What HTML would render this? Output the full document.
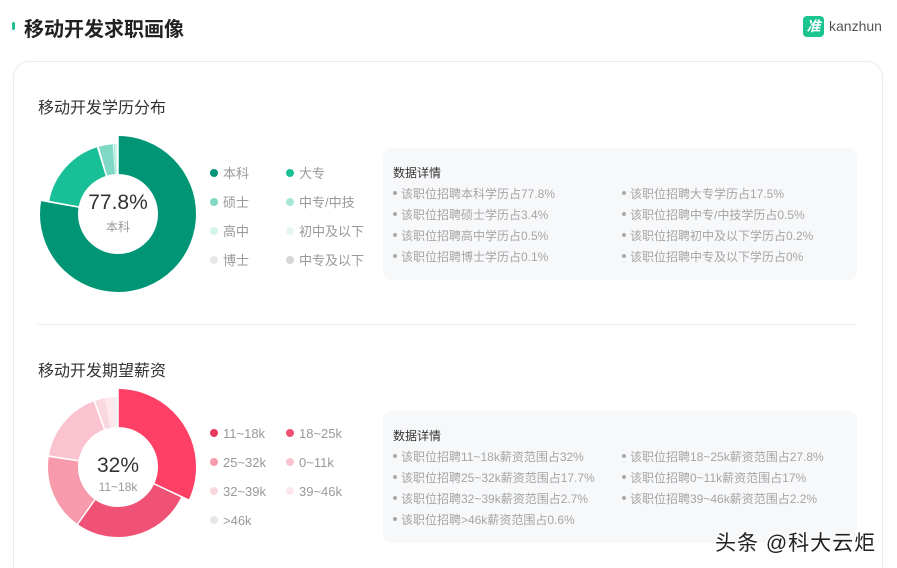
<!DOCTYPE html>
<html><head><meta charset="utf-8"><style>
*{margin:0;padding:0;box-sizing:border-box}
html,body{width:897px;height:568px;overflow:hidden}
body{background:#fff;font-family:"Liberation Sans","Noto Sans CJK SC",sans-serif;position:relative}
.a{position:absolute;white-space:nowrap}
.bar{left:12px;top:22px;width:3px;height:8px;background:#1dbf97;border-radius:2px}
.h1{left:24px;top:13px;font-size:20px;font-weight:bold;color:#222}
.logo{left:803px;top:16px;width:21px;height:21px;background:#19c48f;border-radius:4px;color:#fff;font-size:14px;font-weight:bold;text-align:center;line-height:21px;font-style:italic}
.kz{left:829px;top:18px;font-size:14px;color:#555}
.card{left:13px;top:61px;width:870px;height:507px;border:1px solid #eaeaea;border-bottom:none;border-radius:16px 16px 0 0}
.st{font-size:16px;color:#333;left:38px}
.div{left:38px;top:324px;width:819px;height:1px;background:#ececec}
.lg{font-size:13px;color:#999}
.lg i{display:inline-block;width:8px;height:8px;border-radius:50%;margin-right:5px;vertical-align:1px}
.pn{left:383px;width:474px;height:132px;background:#f7f8fa;border-radius:8px}
.pn b{position:absolute;left:10px;top:16px;font-weight:normal;font-size:12px;color:#333}
.pn span{position:absolute;font-size:12px;color:#a5a5a5;white-space:nowrap}
.pn span:before{content:"";display:inline-block;width:4px;height:4px;border-radius:50%;background:#aaa;margin-right:4px;vertical-align:3px}
.big{font-size:21px;color:#333;text-align:center;width:100px}
.sm{font-size:12px;color:#999;text-align:center;width:100px}
.wm{left:715px;top:527px;font-size:21px;letter-spacing:1px;color:#222;text-shadow:0 0 2px #fff,1px 1px 0 #fff,-1px -1px 0 #fff}
</style></head><body>
<div class="a bar"></div>
<div class="a h1">移动开发求职画像</div>
<div class="a logo">准</div>
<div class="a kz">kanzhun</div>
<div class="a card"></div>
<div class="a st" style="top:94px">移动开发学历分布</div>
<div class="a st" style="top:357px">移动开发期望薪资</div>
<div class="a div"></div>

<svg class="a" style="left:0;top:0" width="240" height="568">
<g transform="rotate(-90 118 214)" fill="none">
<circle cx="118" cy="214" r="59" stroke="#009675" stroke-width="38" stroke-dasharray="288.4 400"/>
<circle cx="118" cy="214" r="55" stroke="#19bf97" stroke-width="30" stroke-dasharray="59.8 400" stroke-dashoffset="-269.4"/>
<circle cx="118" cy="214" r="55" stroke="#7fd9c4" stroke-width="30" stroke-dasharray="11 400" stroke-dashoffset="-330"/>
<circle cx="118" cy="214" r="55" stroke="#b0e9dc" stroke-width="30" stroke-dasharray="1.5 400" stroke-dashoffset="-341.5"/>
<circle cx="118" cy="214" r="55" stroke="#d4f3ec" stroke-width="30" stroke-dasharray="1.5 400" stroke-dashoffset="-343.2"/>
</g>
<g stroke="#fff" stroke-width="1.5">
<line x1="118" y1="214" x2="118" y2="134"/>
<line x1="118" y1="214" x2="40.2" y2="200.3"/>
<line x1="118" y1="214" x2="97.3" y2="146.1"/>
</g>
<g transform="rotate(-90 118 467)" fill="none">
<circle cx="118" cy="467" r="59" stroke="#ff4066" stroke-width="38" stroke-dasharray="118.6 400"/>
<circle cx="118" cy="467" r="55" stroke="#ef5274" stroke-width="30" stroke-dasharray="95.3 400" stroke-dashoffset="-111"/>
<circle cx="118" cy="467" r="55" stroke="#f79aab" stroke-width="30" stroke-dasharray="60.4 400" stroke-dashoffset="-206.3"/>
<circle cx="118" cy="467" r="55" stroke="#fbc3cf" stroke-width="30" stroke-dasharray="58.8 400" stroke-dashoffset="-266.7"/>
<circle cx="118" cy="467" r="55" stroke="#f9d8df" stroke-width="30" stroke-dasharray="9.3 400" stroke-dashoffset="-325.5"/>
<circle cx="118" cy="467" r="55" stroke="#fde9ed" stroke-width="30" stroke-dasharray="7.6 400" stroke-dashoffset="-334.8"/>
<circle cx="118" cy="467" r="55" stroke="#eee" stroke-width="30" stroke-dasharray="3.2 400" stroke-dashoffset="-342.4"/>
</g>
<g stroke="#fff" stroke-width="1.5">
<line x1="118" y1="467" x2="118" y2="387"/>
<line x1="118" y1="467" x2="189.6" y2="500.4"/>
<line x1="118" y1="467" x2="77" y2="525"/>
<line x1="118" y1="467" x2="47.9" y2="455.9"/>
<line x1="118" y1="467" x2="94" y2="400"/>
</g>
</svg>
<div class="a big" style="left:68px;top:191px">77.8%</div>
<div class="a sm" style="left:68px;top:218px">本科</div>
<div class="a big" style="left:68px;top:454px">32%</div>
<div class="a sm" style="left:68px;top:480px">11~18k</div>

<div class="a lg" style="left:210px;top:163px"><i style="background:#009675"></i>本科</div>
<div class="a lg" style="left:286px;top:163px"><i style="background:#19bf97"></i>大专</div>
<div class="a lg" style="left:210px;top:192px"><i style="background:#7fd9c4"></i>硕士</div>
<div class="a lg" style="left:286px;top:192px"><i style="background:#a8e6d8"></i>中专/中技</div>
<div class="a lg" style="left:210px;top:221px"><i style="background:#d4f3ec"></i>高中</div>
<div class="a lg" style="left:286px;top:221px"><i style="background:#e6f7f3"></i>初中及以下</div>
<div class="a lg" style="left:210px;top:250px"><i style="background:#e8e8e8"></i>博士</div>
<div class="a lg" style="left:286px;top:250px"><i style="background:#d6d6d6"></i>中专及以下</div>

<div class="a lg" style="left:210px;top:426px"><i style="background:#e8385e"></i>11~18k</div>
<div class="a lg" style="left:286px;top:426px"><i style="background:#ef5274"></i>18~25k</div>
<div class="a lg" style="left:210px;top:455px"><i style="background:#f79aab"></i>25~32k</div>
<div class="a lg" style="left:286px;top:455px"><i style="background:#fbc3cf"></i>0~11k</div>
<div class="a lg" style="left:210px;top:484px"><i style="background:#f9d8df"></i>32~39k</div>
<div class="a lg" style="left:286px;top:484px"><i style="background:#fde9ed"></i>39~46k</div>
<div class="a lg" style="left:210px;top:513px"><i style="background:#e6e6e6"></i>&gt;46k</div>

<div class="a pn" style="top:148px"><b>数据详情</b>
<span style="left:10px;top:37px">该职位招聘本科学历占77.8%</span>
<span style="left:239px;top:37px">该职位招聘大专学历占17.5%</span>
<span style="left:10px;top:58px">该职位招聘硕士学历占3.4%</span>
<span style="left:239px;top:58px">该职位招聘中专/中技学历占0.5%</span>
<span style="left:10px;top:79px">该职位招聘高中学历占0.5%</span>
<span style="left:239px;top:79px">该职位招聘初中及以下学历占0.2%</span>
<span style="left:10px;top:100px">该职位招聘博士学历占0.1%</span>
<span style="left:239px;top:100px">该职位招聘中专及以下学历占0%</span>
</div>
<div class="a pn" style="top:411px"><b>数据详情</b>
<span style="left:10px;top:37px">该职位招聘11~18k薪资范围占32%</span>
<span style="left:239px;top:37px">该职位招聘18~25k薪资范围占27.8%</span>
<span style="left:10px;top:58px">该职位招聘25~32k薪资范围占17.7%</span>
<span style="left:239px;top:58px">该职位招聘0~11k薪资范围占17%</span>
<span style="left:10px;top:79px">该职位招聘32~39k薪资范围占2.7%</span>
<span style="left:239px;top:79px">该职位招聘39~46k薪资范围占2.2%</span>
<span style="left:10px;top:100px">该职位招聘&gt;46k薪资范围占0.6%</span>
</div>
<div class="a wm">头条 @科大云炬</div>
</body></html>
